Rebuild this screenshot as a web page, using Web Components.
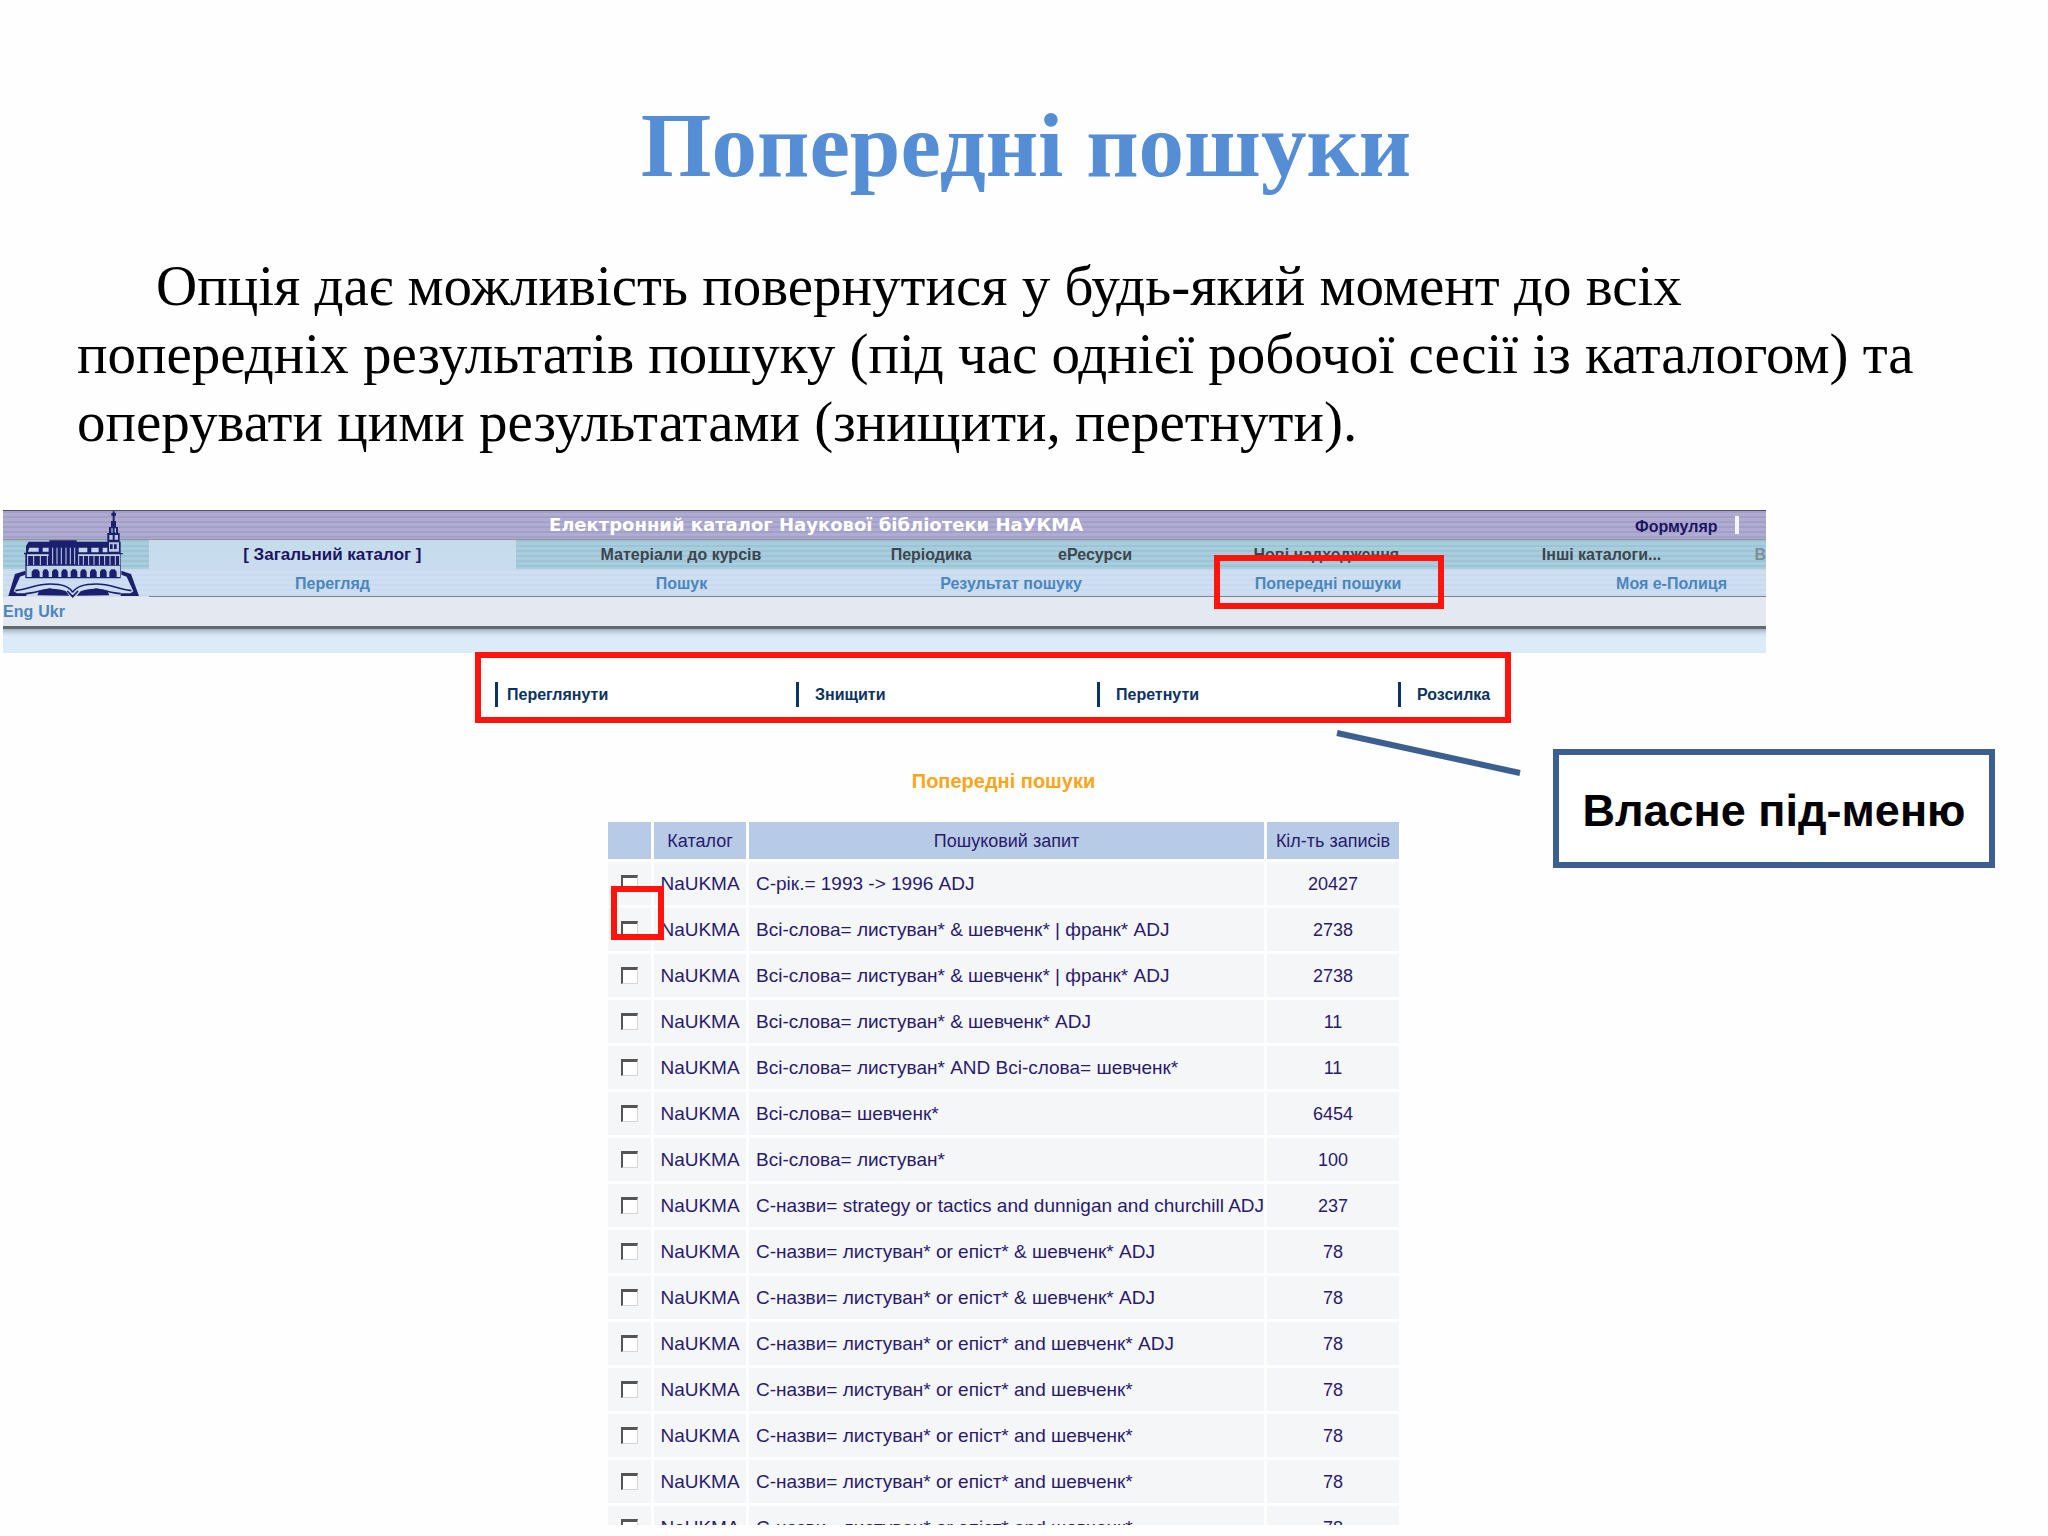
<!DOCTYPE html>
<html lang="uk">
<head>
<meta charset="UTF-8">
<title>Попередні пошуки</title>
<style>
    html, body {
        height: 100%;
        margin: 0;
    }

    body {
        background: #fefefe;
        font-family: "Liberation Sans", Arial, sans-serif;
        overflow: hidden;
    }
</style>
</head>
<body>
<slide-page>
    <slide-heading slot="heading">Попередні пошуки</slide-heading>
    <slide-text slot="text">Опція дає можливість повернутися у будь-який момент до всіх попередніх результатів пошуку (під час однієї робочої сесії із каталогом) та оперувати цими результатами (знищити, перетнути).</slide-text>
    <catalog-header>Електронний каталог Наукової бібліотеки НаУКМА</catalog-header>
    <sub-menu></sub-menu>
    <search-history>Попередні пошуки</search-history>
    <slide-callout slot="over">Власне під-меню</slide-callout>
</slide-page>

<script>
class SlidePage extends HTMLElement {
    connectedCallback() {
        this.attachShadow({ mode: 'open' });
        this.shadowRoot.innerHTML = `
            <style>
                :host {
                    display: block;
                    height: 100%;
                    position: relative;
                }

                .page {
                    display: flex;
                    flex-direction: column;
                    box-sizing: border-box;
                    height: 100%;
                    padding: 96px 0 11px;
                }
            </style>
            <main class="page">
                <slot name="heading"></slot>
                <slot name="text"></slot>
                <slot></slot>
            </main>
            <slot name="over"></slot>
        `;
    }
}

class SlideHeading extends HTMLElement {
    connectedCallback() {
        this.attachShadow({ mode: 'open' });
        this.shadowRoot.innerHTML = `
            <style>
                :host {
                    display: block;
                    padding-left: 4px;
                }

                h1 {
                    margin: 0;
                    color: #558ed5;
                    font: bold 91px/100px "Liberation Serif", "Times New Roman", serif;
                    text-align: center;
                }
            </style>
            <h1><slot></slot></h1>
        `;
    }
}

class SlideText extends HTMLElement {
    connectedCallback() {
        this.attachShadow({ mode: 'open' });
        this.shadowRoot.innerHTML = `
            <style>
                :host {
                    display: block;
                    padding: 56px 108px 54px 77px;
                }

                p {
                    margin: 0;
                    color: #000;
                    font: 57px/68px "Liberation Serif", "Times New Roman", serif;
                    text-indent: 79px;
                }
            </style>
            <p><slot></slot></p>
        `;
    }
}

class CatalogHeader extends HTMLElement {
    connectedCallback() {
        this.attachShadow({ mode: 'open' });
        this.shadowRoot.innerHTML = `
            <style>
                :host {
                    display: block;
                    padding: 0 282px 0 3px;
                }

                header {
                    position: relative;
                    background: #cfdff2;
                }

                a {
                    text-decoration: none;
                    white-space: nowrap;
                }

                .top {
                    display: flex;
                    align-items: center;
                    height: 28px;
                    border-top: 1px solid #50505f;
                    border-bottom: 1px solid #8f8f99;
                    background: repeating-linear-gradient(#a29fc8 0 2px, #b0abd0 2px 5px);
                }

                .name {
                    flex: 1;
                    color: #fff;
                    font: bold 18px/28px "DejaVu Sans", Verdana, sans-serif;
                    text-align: center;
                }

                .user {
                    display: flex;
                    align-items: center;
                    gap: 17px;
                    width: 131px;
                    padding-left: 6px;
                }

                .user a {
                    padding-top: 3px;
                    color: #1c1463;
                    font: bold 16px/25px "Liberation Sans", Arial, sans-serif;
                }

                .user i {
                    width: 4px;
                    height: 18px;
                    background: #f4f4ff;
                }

                nav {
                    display: grid;
                    overflow: hidden;
                    text-align: center;
                }

                nav a {
                    box-sizing: border-box;
                    border-bottom: 1px solid #7d8790;
                }

                .bases {
                    grid-template-columns: 146px 367fr 331fr 170fr 158fr 305fr 246fr 40fr;
                    height: 29px;
                    background: repeating-linear-gradient(#9dc4d6 0 2px, #a8cddd 2px 5px);
                }

                .bases a, .bases span {
                    color: #3c454d;
                    font: bold 16px/29px "Liberation Sans", Arial, sans-serif;
                }

                .bases span {
                    border-bottom: 1px solid #7d8790;
                    box-sizing: border-box;
                }

                .bases .current {
                    border-bottom: 0;
                    background: linear-gradient(#c4dcea, #cadcf0);
                    color: #1c1463;
                    font-size: 17px;
                }

                .bases .cut {
                    padding-left: 30px;
                    color: #7c8f9b;
                    text-align: left;
                }

                .pages {
                    grid-template-columns: 146px 367fr 331fr 328fr 306fr 285fr;
                    height: 28px;
                    background: repeating-linear-gradient(#c9d9ef 0 2px, #cddff0 2px 5px);
                    overflow: visible;
                }

                .pages a {
                    height: 28px;
                    color: #4a86bd;
                    font: bold 16px/29px "Liberation Sans", Arial, sans-serif;
                }

                .pages .marked {
                    position: relative;
                }

                .pages .shelf {
                    padding-right: 39px;
                    text-align: right;
                }

                .frame {
                    position: absolute;
                    left: 39px;
                    top: -14px;
                    width: 218px;
                    height: 42px;
                    border: 6px solid #fe140c;
                    z-index: 1;
                }

                .lang {
                    display: flex;
                    gap: 5px;
                    height: 29px;
                    border-bottom: 3px solid #5f6b68;
                    background: #e3e8f1;
                }

                .lang a {
                    color: #4a86bd;
                    font: bold 16px/29px "Liberation Sans", Arial, sans-serif;
                }

                .strip {
                    height: 24px;
                    background: linear-gradient(#a3b1c4, #d3e1ef 5px, #dcebf8 8px);
                }

                svg {
                    position: absolute;
                    left: 5px;
                    top: 1px;
                    width: 132px;
                    height: 87px;
                }
            </style>
            <header>
                <div class="top">
                    <div class="name"><slot></slot></div>
                    <div class="user"><a href="#form">Формуляр</a><i></i></div>
                </div>
                <nav class="bases">
                    <span></span>
                    <a href="#all" class="current">[ Загальний каталог ]</a>
                    <a href="#courses">Матеріали до курсів</a>
                    <a href="#periodicals">Періодика</a>
                    <a href="#eresources">еРесурси</a>
                    <a href="#new">Нові надходження</a>
                    <a href="#other">Інші каталоги...</a>
                    <a href="#more" class="cut">В</a>
                </nav>
                <nav class="pages">
                    <div></div>
                    <a href="#browse">Перегляд</a>
                    <a href="#search">Пошук</a>
                    <a href="#result">Результат пошуку</a>
                    <a href="#history" class="marked">Попередні пошуки<span class="frame"></span></a>
                    <a href="#shelf" class="shelf">Моя е-Полиця</a>
                </nav>
                <div class="lang"><a href="#en">Eng</a><a href="#uk">Ukr</a></div>
                <div class="strip"></div>
                <svg viewBox="24 32 396 261" fill="#1b1f6e" aria-hidden="true">
                    <!-- tower -->
                    <path d="M338 33h6v5h4v8h-4v16h4v18h6v18h5v26h3v34h-44V126h4V98h5V80h6V62h5V46h-4v-8h4z"/>
                    <path fill="#b9c6e0" d="M334 84h4v13h-4zM344 84h4v13h-4zM328 104h10v14h-10zM344 104h10v14h-10zM327 126h30v28h-30z"/>
                    <path d="M330 132h8v14h-8zM342 132h8v14h-8z"/>
                    <!-- roof and walls -->
                    <path d="M86 124h62v-4h82v4h96v34h42v4h-6v72H76v-72h-4v-5h6v-20z"/>
                    <path fill="#c3d6e8" d="M88 142h28v12H84zM128 142h18v12h-18zM236 142h26v14h-26zM274 142h22v14h-22zM308 142h14v14h-14zM82 162h64v5H82zM236 162h122v5H236zM80 196h280v8H80z"/>
                    <path stroke="#c3d6e8" stroke-width="3" fill="none" d="M83 162v32M101 166v28M121 166v28M142 162v32M158 142v50M171 142v50M184 142v50M198 142v50M211 142v50M224 142v50M236 162v32M250 166v28M266 166v28M282 166v28M298 166v28M314 166v28M330 166v28M346 166v28M359 162v32"/>
                    <path fill="#c3d6e8" d="M80 202h280v28h-10v-16l-6-7h-10l-6 7v16h-8v-16l-5-7h-10l-5 7v16h-10v-16l-5-7h-10l-5 7v16h-10v-16l-5-7h-9l-5 7v16h-9v-16l-5-7h-10l-5 7v16h-9v-16l-5-7h-9l-5 7v16h-9v-16l-5-7h-9l-5 7v16h-10v-16l-5-7h-9l-4 7v16h-9v-16l-6-7h-12l-6 7v16H80z"/>
                    <!-- open book -->
                    <path d="M76 211v12l-16 6-19 44 10 6h28v8H25l20-66zM364 211v12l16 6 20 44-8 6h-30v8h55l-24-66z"/>
                    <path fill="none" stroke="#1b1f6e" stroke-width="5" d="M46 271c45-6 62-20 105-20 34 0 58 8 67 25M394 271c-45-6-62-20-105-20-34 0-61 8-71 25M76 280c30-2 50-12 78-14M362 280c-30-2-50-12-78-14M202 272l16 17 16-17"/>
                    <path d="M112 285l6-14c24-8 58-8 80 2l10 13zM328 285l-6-14c-24-8-58-8-80 2l-12 13z"/>
                </svg>
            </header>
        `;
    }
}

class SubMenu extends HTMLElement {
    connectedCallback() {
        this.attachShadow({ mode: 'open' });
        this.shadowRoot.innerHTML = `
            <style>
                :host {
                    display: block;
                    margin-top: -1px;
                    padding: 0 537px 0 475px;
                    z-index: 1;
                }

                nav {
                    display: grid;
                    grid-template-columns: 301fr 301fr 301fr 107fr;
                    padding: 24px 0 10px 14px;
                    border: 6px solid #fe140c;
                    background: #fff;
                }

                a {
                    padding-left: 16px;
                    border-left: 3px solid #0b3260;
                    color: #0b3260;
                    font: bold 16px/25px "Liberation Sans", Arial, sans-serif;
                    text-decoration: none;
                }

                a:first-child {
                    padding-left: 9px;
                }
            </style>
            <nav>
                <a href="#view">Переглянути</a>
                <a href="#delete">Знищити</a>
                <a href="#cross">Перетнути</a>
                <a href="#mail">Розсилка</a>
            </nav>
        `;
    }
}

class SearchHistory extends HTMLElement {
    connectedCallback() {
        const searches = [
            ['С-рік.= 1993 -> 1996 ADJ', 20427],
            ['Всі-слова= листуван* & шевченк* | франк* ADJ', 2738],
            ['Всі-слова= листуван* & шевченк* | франк* ADJ', 2738],
            ['Всі-слова= листуван* & шевченк* ADJ', 11],
            ['Всі-слова= листуван* AND Всі-слова= шевченк*', 11],
            ['Всі-слова= шевченк*', 6454],
            ['Всі-слова= листуван*', 100],
            ['С-назви= strategy or tactics and dunnigan and churchill ADJ', 237],
            ['С-назви= листуван* or епіст* & шевченк* ADJ', 78],
            ['С-назви= листуван* or епіст* & шевченк* ADJ', 78],
            ['С-назви= листуван* or епіст* and шевченк* ADJ', 78],
            ['С-назви= листуван* or епіст* and шевченк*', 78],
            ['С-назви= листуван* or епіст* and шевченк*', 78],
            ['С-назви= листуван* or епіст* and шевченк*', 78],
            ['С-назви= листуван* or епіст* and шевченк*', 78]
        ];

        this.attachShadow({ mode: 'open' });
        this.shadowRoot.innerHTML = `
            <style>
                :host {
                    display: flex;
                    flex-direction: column;
                    flex: 1;
                    min-height: 0;
                    padding: 46px 646px 0 605px;
                }

                h2 {
                    margin: 0 0 26px;
                    color: #faa51a;
                    font: bold 20px/24px "Liberation Sans", Arial, sans-serif;
                    text-align: center;
                }

                .list {
                    flex: 1;
                    min-height: 0;
                    overflow: hidden;
                    position: relative;
                }

                table {
                    width: 100%;
                    table-layout: fixed;
                    border-collapse: separate;
                    border-spacing: 3px;
                    color: #2a1a6c;
                    font: 18px/24px "Liberation Sans", Arial, sans-serif;
                    white-space: nowrap;
                }

                th {
                    height: 37px;
                    padding: 0;
                    background: #b7cbe7;
                    font-weight: normal;
                }

                td {
                    height: 43px;
                    padding: 0;
                    background: #f5f6f8;
                    text-align: center;
                }

                td:nth-child(2), td:nth-child(3) {
                    font-size: 19px;
                }

                td:nth-child(3) {
                    padding-left: 7px;
                    text-align: left;
                }

                .pick { width: 43px; }
                .base { width: 92px; }
                .count { width: 132px; }

                input {
                    appearance: none;
                    display: block;
                    box-sizing: border-box;
                    width: 17px;
                    height: 17px;
                    margin: 0 auto;
                    border: 1px solid #d4d4d4;
                    border-top: 3px solid #555;
                    border-left: 2px solid #555;
                    background: #fff;
                }

                .frame {
                    position: absolute;
                    left: 6px;
                    top: 67px;
                    width: 41px;
                    height: 42px;
                    border: 6px solid #fe140c;
                }
            </style>
            <h2><slot></slot></h2>
            <div class="list">
                <table>
                    <thead>
                        <tr>
                            <th class="pick"></th>
                            <th class="base">Каталог</th>
                            <th>Пошуковий запит</th>
                            <th class="count">Кіл-ть записів</th>
                        </tr>
                    </thead>
                    <tbody></tbody>
                </table>
                <div class="frame"></div>
            </div>
        `;

        const body = this.shadowRoot.querySelector('tbody');
        searches.forEach(([query, count]) => {
            const row = body.insertRow();
            const box = document.createElement('input');
            box.type = 'checkbox';
            box.setAttribute('aria-label', query);
            row.insertCell().append(box);
            row.insertCell().textContent = 'NaUKMA';
            row.insertCell().textContent = query;
            row.insertCell().textContent = count;
        });
    }
}

class SlideCallout extends HTMLElement {
    connectedCallback() {
        this.attachShadow({ mode: 'open' });
        this.shadowRoot.innerHTML = `
            <style>
                :host {
                    position: absolute;
                    top: 729px;
                    right: 53px;
                    display: flex;
                    align-items: flex-start;
                    gap: 31px;
                }

                svg {
                    width: 187px;
                    height: 48px;
                }

                .box {
                    box-sizing: border-box;
                    width: 442px;
                    margin-top: 20px;
                    padding: 30px 0 25px;
                    border: 6px solid #3b6090;
                    background: #fff;
                    color: #000;
                    font: bold 45px/52px "Liberation Sans", Arial, sans-serif;
                    text-align: center;
                    white-space: nowrap;
                }
            </style>
            <svg viewBox="0 0 187 48" aria-hidden="true">
                <path d="M2 4L185 44" stroke="#3b6090" stroke-width="6"/>
            </svg>
            <div class="box"><slot></slot></div>
        `;
    }
}

customElements.define('slide-page', SlidePage);
customElements.define('slide-heading', SlideHeading);
customElements.define('slide-text', SlideText);
customElements.define('catalog-header', CatalogHeader);
customElements.define('sub-menu', SubMenu);
customElements.define('search-history', SearchHistory);
customElements.define('slide-callout', SlideCallout);
</script>
</body>
</html>
